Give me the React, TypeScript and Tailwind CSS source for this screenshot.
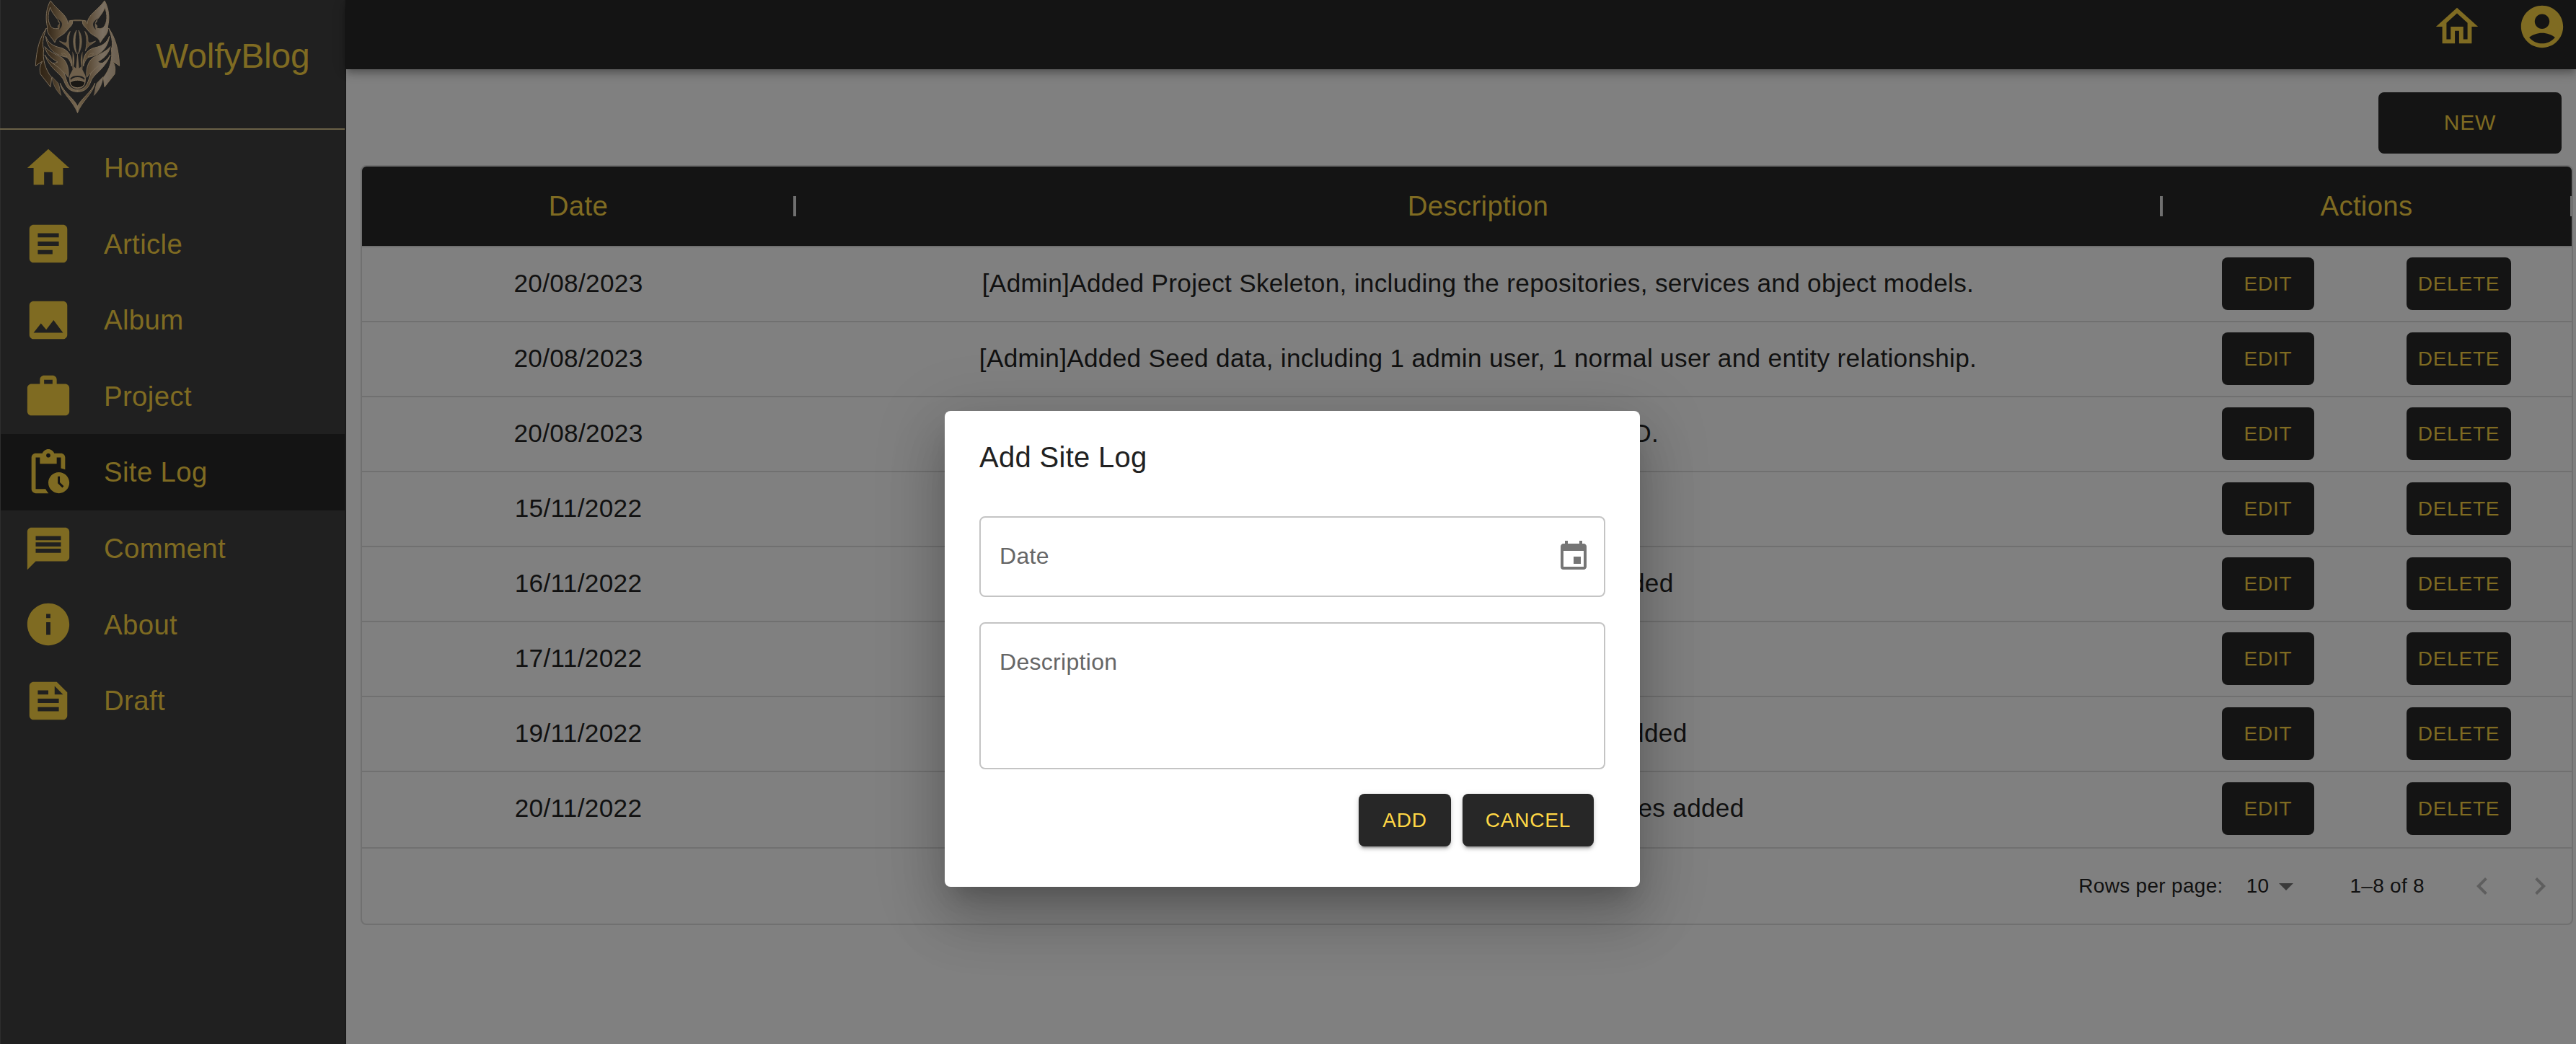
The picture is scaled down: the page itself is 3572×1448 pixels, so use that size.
import type { ReactNode } from "react";
import {
  MdArrowDropDown,
  MdArticle,
  MdEvent,
  MdFeed,
  MdHome,
  MdImage,
  MdInfo,
  MdKeyboardArrowLeft,
  MdKeyboardArrowRight,
  MdMessage,
  MdOutlineHome,
  MdPendingActions,
  MdWork,
} from "react-icons/md";

const navItems = [
  { label: "Home", Icon: MdHome },
  { label: "Article", Icon: MdArticle },
  { label: "Album", Icon: MdImage },
  { label: "Project", Icon: MdWork },
  { label: "Site Log", Icon: MdPendingActions, active: true },
  { label: "Comment", Icon: MdMessage },
  { label: "About", Icon: MdInfo },
  { label: "Draft", Icon: MdFeed },
];

const logs = [
  { date: "20/08/2023", text: "[Admin]Added Project Skeleton, including the repositories, services and object models." },
  { date: "20/08/2023", text: "[Admin]Added Seed data, including 1 admin user, 1 normal user and entity relationship." },
  { date: "20/08/2023", text: "[Admin]Added the basic CRUD." },
  { date: "15/11/2022", text: "[Admin]Site created" },
  { date: "16/11/2022", text: "[Admin]Project functionality added" },
  { date: "17/11/2022", text: "[Admin]Album added" },
  { date: "19/11/2022", text: "[Admin]Site Logs functionality added" },
  { date: "20/11/2022", text: "[Admin]Comment and Site Log services added" },
];

/* One half of the wolf's head; the other half is its mirror image. */
function WolfHalf({ fill, edge }: { fill: string; edge: string }) {
  return (
    <g fill={fill} stroke={edge} strokeWidth={3} strokeLinejoin="round">
      {/* mane */}
      <path d="M193 117C166 156 151 205 148 274L176 255C162 280 166 294 168 308L210 362L215 322C188 290 176 245 182 205C172 180 184 140 193 117Z" />
      {/* ear */}
      <path d="M210 3C192 35 188 75 197 112C192 140 212 150 228 177C232 152 262 150 276 130C292 108 303 108 302 86C290 84 288 90 282 98C280 60 240 45 210 3Z" />
      <path d="M209 30C197 60 198 95 214 113C224 122 236 118 244 119C236 106 246 104 250 96C238 92 246 84 236 76C226 62 213 48 209 30Z" fill="#202020" />
      <path d="M236 76C250 88 254 100 246 124C264 106 262 90 236 76Z" fill="#202020" stroke="none" />
      {/* brow and cheek */}
      <path d="M190 150C200 180 222 192 250 198C284 206 304 236 298 276C294 256 286 244 276 238C250 232 200 222 190 150Z" />
      <path d="M186 194C200 212 232 226 258 240C280 256 288 290 284 322C270 296 236 290 210 262C222 264 232 262 240 258C220 246 196 232 186 194Z" />
      <path d="M186 228C206 266 262 280 272 318C280 350 292 374 323 374L323 382C290 382 276 364 266 336C254 306 210 290 186 228Z" />
      {/* eye */}
      <path d="M256 222C266 220 276 226 279 236C268 236 260 232 256 222Z" strokeWidth={2} />
      {/* forehead marks */}
      <path d="M292 130C272 152 284 168 276 178C268 180 258 174 247 171C262 186 276 184 290 212C284 186 282 160 292 130Z" strokeWidth={2} />
      <path d="M318 126C300 152 302 196 319 224C311 190 310 160 318 126Z" strokeWidth={2} />
      <path d="M301 214C312 236 312 262 302 290C299 262 304 240 301 214Z" stroke="none" />
      {/* throat */}
      <path d="M250 346C258 390 304 420 322.500 469L322.500 442C306 408 268 388 250 346Z" />
      <path d="M217 320C219 352 234 376 254 397C248 378 250 364 242 346Z" strokeWidth={2} />
    </g>
  );
}

function WolfLogo() {
  return (
    <svg viewBox="144 0 360 474" className="h-[158px] w-[120px] shrink-0">
      <defs>
        <linearGradient id="dark" x1="150" x2="322" y1="0" y2="0" gradientUnits="userSpaceOnUse">
          <stop offset="0" stopColor="#2b1f10" />
          <stop offset="0.35" stopColor="#3d3020" />
          <stop offset="0.65" stopColor="#63533d" />
          <stop offset="1" stopColor="#776852" />
        </linearGradient>
        <linearGradient id="light" x1="150" x2="322" y1="0" y2="0" gradientUnits="userSpaceOnUse">
          <stop offset="0" stopColor="#6b5f50" />
          <stop offset="0.4" stopColor="#7b7062" />
          <stop offset="0.75" stopColor="#5a4a35" />
          <stop offset="1" stopColor="#75674f" />
        </linearGradient>
      </defs>
      <path d="M284 86C300 80 345 80 361 86L352 104L344 88H302L294 104Z" fill="#6b5d48" />
      <WolfHalf fill="url(#dark)" edge="#7a6c58" />
      <g transform="translate(645 0) scale(-1 1)">
        <WolfHalf fill="url(#light)" edge="#7c6d57" />
      </g>
      {/* muzzle */}
      <path d="M322.500 214L316 284L306 276C304 296 284 310 288 334C290 360 304 370 322.500 370C341 370 355 360 357 334C361 310 341 296 339 276L329 284Z" fill="#6f604c" />
      <path d="M294 330C304 314 341 314 351 330" fill="none" stroke="#202020" strokeWidth={6} />
      <path d="M292 344C300 330 345 330 353 344C350 372 295 372 292 344Z" fill="#1a1815" stroke="#85755e" strokeWidth={3} />
    </svg>
  );
}

function AccountIcon() {
  return (
    <svg viewBox="0 0 24 24" fill="currentColor" className="size-[70px]">
      <path d="M12 2C6.480 2 2 6.480 2 12s4.480 10 10 10 10-4.480 10-10S17.520 2 12 2zm0 4c1.930 0 3.500 1.570 3.500 3.500S13.930 13 12 13s-3.500-1.570-3.500-3.500S10.070 6 12 6zm0 14c-2.030 0-4.430-.820-6.140-2.880C7.550 15.800 9.680 15 12 15s4.450.8 6.140 2.120C16.430 19.180 14.030 20 12 20z" />
    </svg>
  );
}

function Sidebar() {
  return (
    <aside className="flex w-[480px] shrink-0 flex-col border-r-2 border-l border-r-[#1a1a1a] border-l-[#2e2e2e] bg-[#202020] text-[#7f6b22]">
      <div className="-ml-px flex h-[180px] items-start border-b-2 border-[#6a6147] pl-12">
        <WolfLogo />
        <span className="ml-[48px] pt-[42px] text-[48px] leading-[72px] tracking-[-0.2px]">WolfyBlog</span>
      </div>
      <nav className="flex flex-col">
        {navItems.map(({ label, Icon, active }) => (
          <a
            key={label}
            className={`flex h-[105.6px] items-center gap-[42px] pl-[31px] text-[38.4px] tracking-[0.36px] ${active ? "bg-[#141414]" : ""}`}
          >
            <Icon className="size-[70px]" />
            <span>{label}</span>
          </a>
        ))}
      </nav>
    </aside>
  );
}

function HeaderCell({ children, className }: { children: ReactNode; className: string }) {
  return (
    <div className={`relative flex items-center justify-center ${className}`}>
      <span>{children}</span>
      <span className="absolute top-[41px] -right-[2px] h-7 w-1 bg-[#707070]" />
    </div>
  );
}

function RowButton({ children, className }: { children: ReactNode; className: string }) {
  return (
    <button
      className={`flex h-[73px] items-center justify-center rounded-lg bg-[#141414] text-[28px] tracking-[0.8px] text-[#7f6b22] ${className}`}
    >
      {children}
    </button>
  );
}

function LogTable() {
  return (
    <section className="mr-1 ml-5 overflow-hidden rounded-lg border-2 border-[#707070] tracking-[0.3px] text-[#111111]">
      <div className="flex h-28 border-b-2 border-[#707070] bg-[#141414] bg-clip-padding text-[38.4px] text-[#7f6b22]">
        <HeaderCell className="w-[600px]">Date</HeaderCell>
        <HeaderCell className="flex-1">Description</HeaderCell>
        <HeaderCell className="w-[569px]">Actions</HeaderCell>
      </div>
      {logs.map((log, i) => (
        <div
          key={i}
          className="flex h-[104px] items-start border-b-2 border-[#707070] pt-[14px] text-[35.2px] leading-[72px] last-of-type:border-b-0"
        >
          <div className="w-[600px] text-center">{log.date}</div>
          <div className="flex-1 text-center">{log.text}</div>
          <div className="flex w-[569px] justify-around px-5">
            <RowButton className="w-32">EDIT</RowButton>
            <RowButton className="w-[145px]">DELETE</RowButton>
          </div>
        </div>
      ))}
      <footer className="flex h-[106px] items-center justify-end border-t-2 border-[#707070] pr-5 text-[28px]">
        <span>Rows per page:</span>
        <span className="ml-8">10</span>
        <MdArrowDropDown className="size-12 text-[#3a3a3a]" />
        <span className="ml-16">1–8 of 8</span>
        <MdKeyboardArrowLeft className="ml-14 size-12 text-[#5e5e5e]" />
        <MdKeyboardArrowRight className="ml-8 size-12 text-[#5e5e5e]" />
      </footer>
    </section>
  );
}

function DialogButton({ children, className }: { children: ReactNode; className: string }) {
  return (
    <button
      className={`flex h-[73px] items-center justify-center rounded-lg bg-[#272727] text-[28px] tracking-[0.8px] text-[#ffd745] shadow-[0_6px_2px_-4px_rgba(0,0,0,0.2),0_4px_4px_0_rgba(0,0,0,0.14),0_2px_10px_0_rgba(0,0,0,0.12)] ${className}`}
    >
      {children}
    </button>
  );
}

function AddDialog() {
  return (
    <div
      role="dialog"
      className="absolute top-[570px] left-[1310px] flex h-[660px] w-[964px] flex-col rounded-lg bg-white px-12 shadow-[0_22px_30px_-14px_rgba(0,0,0,0.2),0_48px_76px_6px_rgba(0,0,0,0.14),0_18px_92px_16px_rgba(0,0,0,0.12)]"
    >
      <h2 className="pt-8 text-[40px] leading-[64px] tracking-[0.3px] text-[#212121]">Add Site Log</h2>
      <div className="mt-[50px] flex h-28 items-center justify-between rounded-lg border-2 border-[#c4c4c4] pr-[18px] pl-[26px] text-[32px] tracking-[0.3px] text-[#666666]">
        <span className="pb-[2px]">Date</span>
        <MdEvent className="size-12 text-[#757575]" />
      </div>
      <div className="mt-[35px] h-[204px] rounded-lg border-2 border-[#c4c4c4] pt-[30px] pl-[26px] text-[32px] leading-[46px] tracking-[0.3px] text-[#666666]">
        Description
      </div>
      <div className="mt-[34px] flex justify-end gap-4 pr-4">
        <DialogButton className="w-32">ADD</DialogButton>
        <DialogButton className="w-[182px]">CANCEL</DialogButton>
      </div>
    </div>
  );
}

export default function App() {
  return (
    <div className="relative flex h-[1448px] w-[3572px] overflow-hidden bg-[#808080] font-['Liberation_Sans',Arial,sans-serif]">
      <Sidebar />
      <main className="flex min-w-0 flex-1 flex-col">
        <header className="flex h-24 shrink-0 items-start justify-end gap-12 bg-[#141414] pt-[2px] pr-3 text-[#7f6b22] shadow-[0_4px_8px_-2px_rgba(0,0,0,0.2),0_8px_10px_0_rgba(0,0,0,0.14),0_2px_20px_0_rgba(0,0,0,0.12)]">
          <MdOutlineHome className="size-[70px]" />
          <AccountIcon />
        </header>
        <div className="flex justify-end pt-8 pr-5 pb-4">
          <button className="flex h-[85px] w-[254px] items-center justify-center rounded-lg bg-[#141414] pb-[2px] text-[30px] tracking-[0.8px] text-[#7f6b22]">
            NEW
          </button>
        </div>
        <LogTable />
      </main>
      <AddDialog />
    </div>
  );
}
